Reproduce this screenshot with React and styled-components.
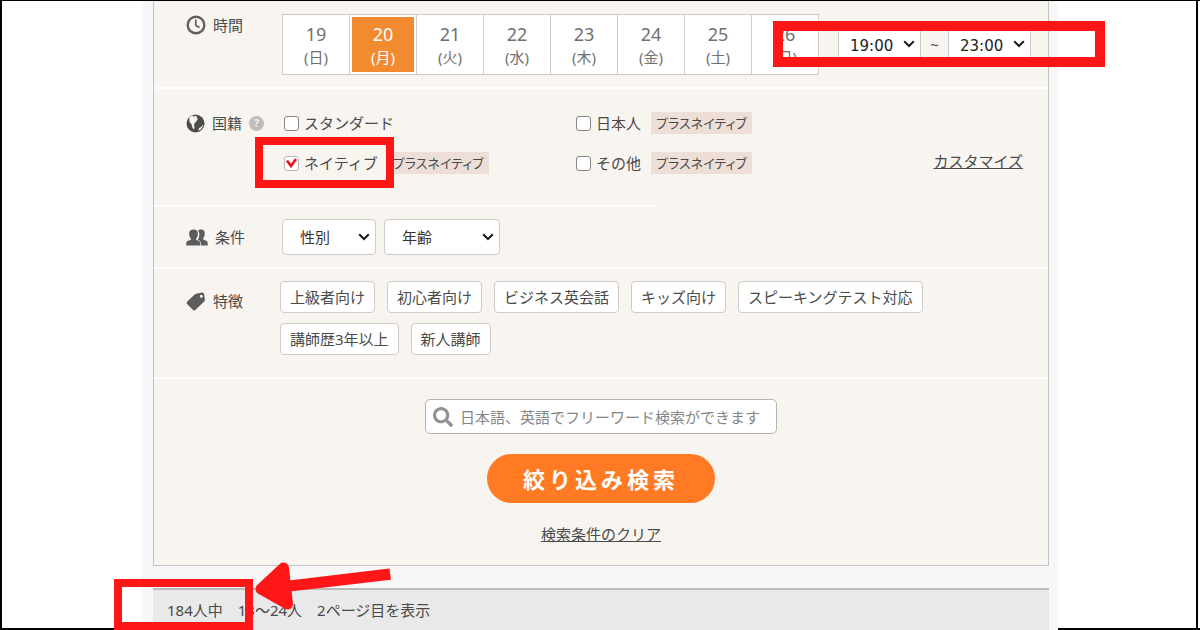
import { useState } from 'react';
import styled, { createGlobalStyle } from 'styled-components';
import { FaSearch } from 'react-icons/fa';

const DAYS = [
  ['19', '日'],
  ['20', '月'],
  ['21', '火'],
  ['22', '水'],
  ['23', '木'],
  ['24', '金'],
  ['25', '土'],
  ['26', '日'],
];

const NATIONALITIES = [
  { id: 'standard', label: 'スタンダード' },
  { id: 'japanese', label: '日本人', plus: true },
  { id: 'native', label: 'ネイティブ', plus: true, checked: true },
  { id: 'other', label: 'その他', plus: true },
];

const FEATURES = [
  '上級者向け',
  '初心者向け',
  'ビジネス英会話',
  'キッズ向け',
  'スピーキングテスト対応',
  '講師歴3年以上',
  '新人講師',
];

export default function App() {
  const [day, setDay] = useState('20');

  return (
    <>
      <GlobalStyle />
      <Page>
        <Frame>
          <Column>
            <Panel>
              <Row>
                <RowLabel>
                  <ClockIcon />
                  時間
                </RowLabel>
                <RowBody>
                  <DayStrip>
                    {DAYS.map(([date, name]) => (
                      <Day key={date} type="button" $active={date === day} onClick={() => setDay(date)}>
                        <DayNumber>{date}</DayNumber>
                        <DayName>({name})</DayName>
                      </Day>
                    ))}
                  </DayStrip>
                  <TimeRange>
                    <Select label="開始時刻" width={83} options={['19:00', '20:00']} time />
                    <Tilde>~</Tilde>
                    <Select label="終了時刻" width={83} options={['23:00', '24:00']} time />
                  </TimeRange>
                </RowBody>
              </Row>
              <Divider />
              <Row $top={22} $bottom={30}>
                <RowLabel>
                  <GlobeIcon />
                  国籍
                  <Help type="button" aria-label="ヘルプ">?</Help>
                </RowLabel>
                <RowBody>
                  <CheckGrid>
                    {NATIONALITIES.map((item) => (
                      <CheckItem key={item.id}>
                        <Checkbox type="checkbox" id={item.id} defaultChecked={item.checked} />
                        <CheckLabel htmlFor={item.id}>{item.label}</CheckLabel>
                        {item.plus && <PlusTag>プラスネイティブ</PlusTag>}
                      </CheckItem>
                    ))}
                  </CheckGrid>
                  <Customize href="#customize">カスタマイズ</Customize>
                </RowBody>
              </Row>
              <Divider $short />
              <Row>
                <RowLabel $center>
                  <PeopleIcon />
                  条件
                </RowLabel>
                <RowBody $gap={8}>
                  <Select label="性別" width={94} options={['性別', '男性', '女性']} />
                  <Select label="年齢" width={116} options={['年齢', '20代', '30代']} />
                </RowBody>
              </Row>
              <Divider />
              <Row $bottom={22}>
                <RowLabel $offset>
                  <TagIcon />
                  特徴
                </RowLabel>
                <Features>
                  {FEATURES.map((name) => (
                    <Feature key={name} type="button">{name}</Feature>
                  ))}
                </Features>
              </Row>
              <Divider />
              <SearchArea>
                <SearchBox>
                  <FaSearch size={20} color="#929292" aria-hidden="true" />
                  <SearchInput
                    type="text"
                    aria-label="フリーワード"
                    placeholder="日本語、英語でフリーワード検索ができます"
                  />
                </SearchBox>
                <Submit type="button">絞り込み検索</Submit>
                <TextLink href="#clear">検索条件のクリア</TextLink>
              </SearchArea>
            </Panel>
            <ResultBar>184人中　13～24人　2ページ目を表示</ResultBar>
            <TimeMark />
            <NativeMark />
            <CountMark />
            <Arrow viewBox="0 0 140 52" aria-hidden="true">
              <path d="M28.5 8 L32.5 44 L6 29 Z" stroke="#ff1616" strokeWidth="11" strokeLinejoin="round" />
              <path d="M34 20.5 L134.500 8.500 L136 19.800 L35 31.500 Z" />
            </Arrow>
          </Column>
        </Frame>
      </Page>
    </>
  );
}

function Select({ label, width, options, time }) {
  return (
    <SelectWrap $width={width}>
      <SelectBox aria-label={label} $time={time}>
        {options.map((option) => (
          <option key={option}>{option}</option>
        ))}
      </SelectBox>
      <Chevron viewBox="0 0 12 8" aria-hidden="true">
        <path d="M1.200 1.200 L6 6 L10.800 1.200" />
      </Chevron>
    </SelectWrap>
  );
}

function ClockIcon() {
  return (
    <svg width="20" height="20" viewBox="0 0 20 20" fill="none" stroke="#606060" aria-hidden="true">
      <circle cx="10" cy="10" r="8.300" strokeWidth="2.400" />
      <path d="M9.800 4.500 V10.500 L13.600 12.600" strokeWidth="1.700" />
    </svg>
  );
}

function GlobeIcon() {
  return (
    <svg width="19" height="20" viewBox="0 0 19 20" aria-hidden="true">
      <circle cx="9.500" cy="10.500" r="9" fill="#4c4c4c" />
      <path
        d="M3.200 4.400 C4.600 3.200 6 2.700 7.200 2.800 L8 4 L9.500 2.600 L11 4 L11.600 6.200 L10.400 8.400 L8.700 9.900 L8 12.200 L8.600 14.900 L7.500 16.400 L6 13.600 L5.600 11.200 L3.800 9.600 L3.300 7 Z"
        fill="#f8f5f0"
      />
      <path d="M16.600 11.700 L17 13.200 L14.700 16.400 L12.300 17.400 L12.900 15.200 L15.200 14 Z" fill="#f8f5f0" />
    </svg>
  );
}

function PeopleIcon() {
  return (
    <svg width="22" height="17" viewBox="0 0 22 17" fill="#5c5c5c" aria-hidden="true">
      <path d="M12 1.600 C12.800 0.800 14 0.600 15.200 0.600 C17.700 0.700 19 2.300 18.700 4.600 C18.700 6.500 18.100 8.200 17.300 9.300 V10.600 L20.700 12 C21.500 12.500 21.800 13.600 21.800 16.600 H14.900 C14.900 13.800 14.600 12.500 13.200 11.500 L11.900 10.700 C12.900 9.300 13.300 7.500 13.300 5.300 C13.300 3.700 12.900 2.400 12 1.600 Z" />
      <path d="M7.500 0.500 C10.600 0.500 12.200 2.200 11.900 4.900 C11.800 6.900 11.200 8.500 10.100 9.600 V10.700 L13 12 C13.900 12.500 14.200 13.600 14.200 16.600 H0.200 C0.200 13.600 0.500 12.500 1.400 12 L4.900 10.700 V9.600 C3.800 8.500 3.200 6.900 3.100 4.900 C2.900 2.200 4.400 0.500 7.500 0.500 Z" />
    </svg>
  );
}

function TagIcon() {
  return (
    <svg width="20" height="20" viewBox="0 0 20 20" aria-hidden="true">
      <path
        fill="#5c5c5c"
        fillRule="evenodd"
        d="M10.200 2.800 L16 1.500 Q17.800 1.300 18.100 3 L18.900 8.600 Q19 9.700 18.200 10.600 L9.300 18.900 Q8 20 6.800 18.800 L1 12.900 Q0.100 11.700 1.300 10.600 L8.700 3.600 Q9.300 2.900 10.200 2.800 Z M15.300 3.700 A1.500 1.500 0 1 0 15.300 6.700 A1.500 1.500 0 1 0 15.300 3.700 Z"
      />
    </svg>
  );
}

const GlobalStyle = createGlobalStyle`
  * {
    box-sizing: border-box;
  }
  body {
    margin: 0;
    background: #fff;
    color: #4a4a4a;
    font-family: "Noto Sans", "Noto Sans CJK JP", sans-serif;
    font-size: 15px;
    line-height: 22px;
  }
  button,
  input,
  select {
    font: inherit;
    color: inherit;
  }
`;

const Page = styled.div`
  border-top: 1px solid #000;
  border-bottom: 2px solid #000;
`;

const Frame = styled.div`
  margin-right: 2px;
  padding-left: 2px;
  border: solid #000;
  border-width: 0 2px;
`;

const Column = styled.main`
  position: relative;
  max-width: 916px;
  margin: 0 auto -2px;
  padding: 0 9px 0 11px;
  background: #f7f7f7;
`;

const Panel = styled.form`
  border: 1px solid #c4c4c4;
  border-top: 0;
  background: #f8f5f0;
`;

const Row = styled.div`
  display: flex;
  padding: ${(p) => p.$top || 12}px 16px ${(p) => p.$bottom || 12}px 32px;
`;

const RowLabel = styled.div`
  display: flex;
  align-items: center;
  align-self: ${(p) => (p.$center ? 'center' : 'flex-start')};
  flex: 0 0 94px;
  gap: 7px;
  height: 24px;
  margin-top: ${(p) => (p.$offset ? '8px' : 0)};
`;

const RowBody = styled.div`
  display: flex;
  flex: 1;
  gap: ${(p) => p.$gap || 19}px;
  padding-left: 2px;
`;

const Divider = styled.div`
  width: ${(p) => (p.$short ? '500px' : '100%')};
  height: 2px;
  background: #fefdfc;
`;

const DayStrip = styled.div`
  display: flex;
  gap: 1px;
  margin-top: 1px;
  border: 1px solid #d0cbc8;
  background: #d0cbc8;
`;

const Day = styled.button`
  display: flex;
  flex-direction: column;
  align-items: center;
  justify-content: center;
  width: 66px;
  height: 59px;
  padding: 0;
  border: 2px solid #fff;
  background: ${(p) => (p.$active ? '#f28a30' : '#fff')};
  color: ${(p) => (p.$active ? '#fff' : '#707070')};
`;

const DayNumber = styled.span`
  font-size: 18px;
  line-height: 24px;
`;

const DayName = styled.span`
  line-height: 22px;
`;

const TimeRange = styled.div`
  display: flex;
  align-items: center;
`;

const Tilde = styled.span`
  width: 27px;
  text-align: center;
`;

const SelectWrap = styled.div`
  display: grid;
  grid-template-columns: 1fr 18px;
  align-items: center;
  width: ${(p) => p.$width}px;
`;

const SelectBox = styled.select`
  grid-area: 1 / 1 / 2 / 3;
  appearance: none;
  width: 100%;
  height: 36px;
  padding: ${(p) => (p.$time ? '3px 11px 0' : '0 17px')};
  border: 1px solid #d0cbc8;
  border-radius: 4px;
  background: #fff;
  color: ${(p) => (p.$time ? '#222' : '#333')};
  ${(p) => p.$time && 'font-family: "DejaVu Sans", sans-serif;'}
`;

const Chevron = styled.svg`
  grid-area: 1 / 2;
  width: 12px;
  height: 8px;
  pointer-events: none;
  path {
    fill: none;
    stroke: #1c1c1c;
    stroke-width: 2;
  }
`;

const Help = styled.button`
  width: 15px;
  height: 15px;
  padding: 0;
  border: 0;
  border-radius: 50%;
  background: #bdbdbd;
  color: #f8f5f0;
  font-size: 10px;
  font-weight: 700;
  line-height: 15px;
`;

const CheckGrid = styled.div`
  display: grid;
  flex: 1;
  grid-template-columns: 292px 1fr;
  row-gap: 16px;
`;

const CheckItem = styled.div`
  display: flex;
  align-items: center;
  height: 24px;
  padding-left: 2px;
`;

const Checkbox = styled.input`
  appearance: none;
  width: 15px;
  height: 15px;
  margin: 0 5px 0 0;
  border: 1px solid #858585;
  border-radius: 3px;
  background: #fff;
  &:checked {
    border-color: #b9b9b9;
    background: #fff
      url('data:image/svg+xml,<svg xmlns="http://www.w3.org/2000/svg" viewBox="0 0 13 13"><path d="M2 3.500 L6 9 L11 2" fill="none" stroke="%23f2121b" stroke-width="2.600"/></svg>')
      center / 13px no-repeat;
  }
`;

const CheckLabel = styled.label`
  margin-right: 10px;
`;

const PlusTag = styled.span`
  padding: 0 5px;
  background: #eddfd8;
  font-size: 13px;
  font-feature-settings: 'palt';
`;

const TextLink = styled.a`
  color: #4a4a4a;
  text-decoration: underline;
`;

const Customize = styled(TextLink)`
  align-self: flex-end;
  margin-right: 9px;
  padding-bottom: 3px;
`;

const Features = styled.div`
  display: flex;
  flex: 1;
  flex-wrap: wrap;
  gap: 10px 12px;
`;

const Feature = styled.button`
  height: 32px;
  padding: 0 9px;
  border: 1px solid #d0cbc8;
  border-radius: 4px;
  background: #fff;
`;

const SearchArea = styled.div`
  display: flex;
  flex-direction: column;
  align-items: center;
  gap: 20px;
  padding: 20px 16px;
`;

const SearchBox = styled.div`
  display: flex;
  align-items: center;
  gap: 7px;
  width: 100%;
  max-width: 352px;
  height: 35px;
  padding: 0 7px;
  border: 1px solid #b4b4b4;
  border-radius: 5px;
  background: #fff;
`;

const SearchInput = styled.input`
  flex: 1;
  min-width: 0;
  padding: 0;
  border: 0;
  outline: 0;
  background: transparent;
  &::placeholder {
    color: #858585;
  }
`;

const Submit = styled.button`
  width: 228px;
  height: 49px;
  padding: 0;
  border: 0;
  border-radius: 25px;
  background: #ff7a22;
  color: #fff;
  font-size: 22px;
  font-weight: 700;
  letter-spacing: 4px;
`;

const ResultBar = styled.div`
  margin-top: 22px;
  padding: 9px 14px;
  border-top: 2px solid #bbb;
  background: #e9e9e9;
`;

// red highlights drawn over the form
const Mark = styled.div`
  position: absolute;
  border: 8px solid #ff1616;
  pointer-events: none;
`;

const TimeMark = styled(Mark)`
  top: 20px;
  left: 631px;
  width: 332px;
  height: 46px;
  border-width: 10px;
`;

const NativeMark = styled(Mark)`
  top: 136px;
  left: 113px;
  width: 139px;
  height: 51px;
`;

const CountMark = styled(Mark)`
  bottom: 0;
  left: -28px;
  width: 139px;
  height: 51px;
`;

const Arrow = styled.svg`
  position: absolute;
  bottom: 18px;
  left: 113px;
  width: 140px;
  height: 52px;
  fill: #ff1616;
  pointer-events: none;
`;
